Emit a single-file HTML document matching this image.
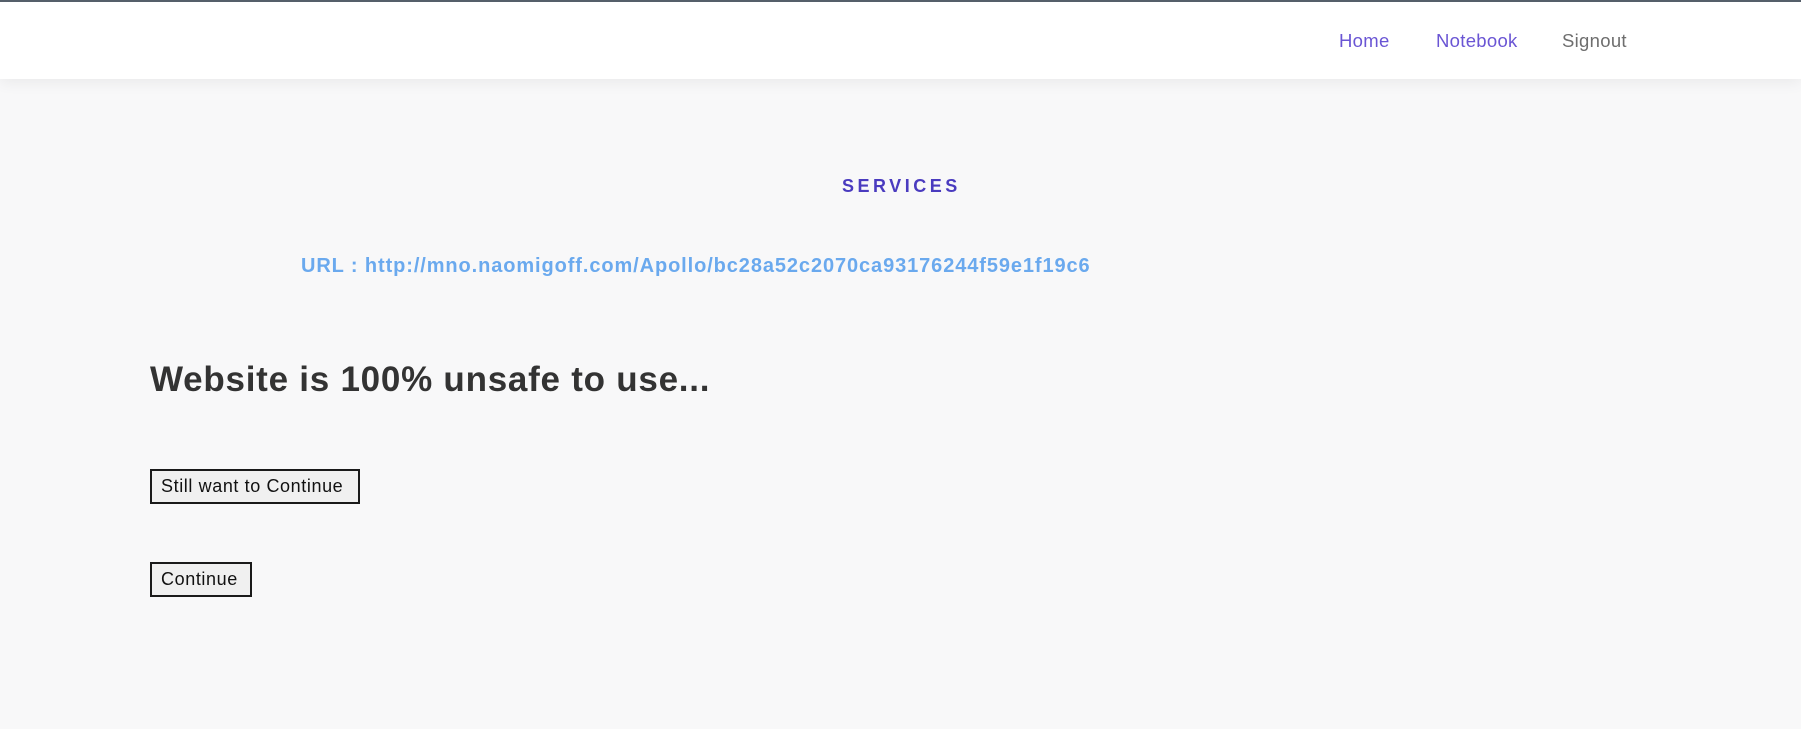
<!DOCTYPE html>
<html><head><meta charset="utf-8"><style>
html,body{margin:0;padding:0;width:1801px;height:729px;overflow:hidden;background:#f8f8f9;font-family:"Liberation Sans",sans-serif;}
.hdr{position:absolute;left:0;top:0;width:1801px;height:79px;background:#fff;border-top:2px solid #555f6a;box-sizing:border-box;box-shadow:0 4px 14px rgba(0,0,0,0.06);}
.nav{position:absolute;top:28px;font-size:18.5px;white-space:nowrap;letter-spacing:0.3px;}
.t{position:absolute;white-space:nowrap;}
.btn{position:absolute;left:150px;height:35px;box-sizing:border-box;border:2px solid #1a1a1a;background:#f0f0f0;font-size:18px;color:#111;line-height:31px;padding-left:9px;letter-spacing:0.6px;}
</style></head><body>
<div class="hdr">
<div class="nav" style="left:1339px;color:#6a55d4">Home</div>
<div class="nav" style="left:1436px;color:#6a55d4">Notebook</div>
<div class="nav" style="left:1562px;color:#6e6e6e">Signout</div>
</div>
<div class="t" style="left:842px;top:176px;font-size:18px;letter-spacing:3.5px;color:#4a3bbf;font-weight:bold">SERVICES</div>
<div class="t" style="left:301px;top:255px;font-size:20px;font-weight:bold;color:#6aa9ee;letter-spacing:0.9px">URL : http://mno.naomigoff.com/Apollo/bc28a52c2070ca93176244f59e1f19c6</div>
<div class="t" style="left:150px;top:360px;font-size:35px;font-weight:bold;color:#333;letter-spacing:0.75px">Website is 100% unsafe to use...</div>
<div class="btn" style="top:469px;width:210px">Still want to Continue</div>
<div class="btn" style="top:562px;width:102px">Continue</div>
</body></html>
